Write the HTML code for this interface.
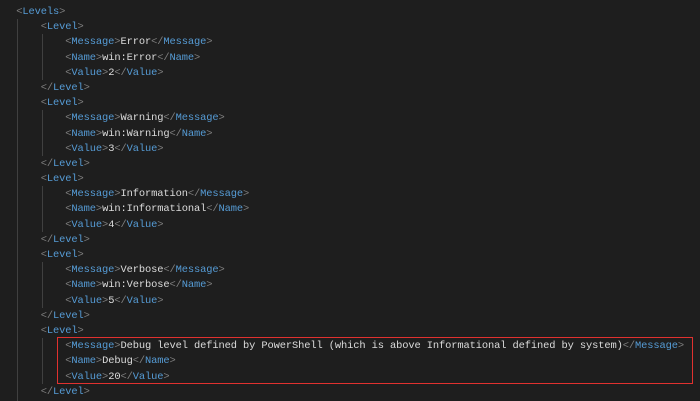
<!DOCTYPE html>
<html><head><style>
html,body{margin:0;padding:0;background:#1e1e1e;width:700px;height:401px;overflow:hidden}
.c{position:absolute;left:4px;top:5px;font-family:"Liberation Mono",monospace;font-size:10.4px;letter-spacing:-0.11px;line-height:15.2px;color:#dcdcdc}
.l{height:15.2px;white-space:pre}
.b{color:#808080}.t{color:#569cd6}
.g{position:absolute;width:1px;background:#404040}
.box{position:absolute;left:57px;top:337px;width:634px;height:45px;border:1px solid #e0312f}
</style></head><body>
<div class="g" style="left:17px;top:19px;height:382px"></div>
<div class="g" style="left:42px;top:34px;height:46px"></div>
<div class="g" style="left:42px;top:110px;height:46px"></div>
<div class="g" style="left:42px;top:186px;height:46px"></div>
<div class="g" style="left:42px;top:262px;height:46px"></div>
<div class="g" style="left:42px;top:338px;height:46px"></div>
<div class="box"></div>
<div class="c"><div class="l">  <span class="b">&lt;</span><span class="t">Levels</span><span class="b">&gt;</span></div><div class="l">      <span class="b">&lt;</span><span class="t">Level</span><span class="b">&gt;</span></div><div class="l">          <span class="b">&lt;</span><span class="t">Message</span><span class="b">&gt;</span>Error<span class="b">&lt;/</span><span class="t">Message</span><span class="b">&gt;</span></div><div class="l">          <span class="b">&lt;</span><span class="t">Name</span><span class="b">&gt;</span>win:Error<span class="b">&lt;/</span><span class="t">Name</span><span class="b">&gt;</span></div><div class="l">          <span class="b">&lt;</span><span class="t">Value</span><span class="b">&gt;</span>2<span class="b">&lt;/</span><span class="t">Value</span><span class="b">&gt;</span></div><div class="l">      <span class="b">&lt;/</span><span class="t">Level</span><span class="b">&gt;</span></div><div class="l">      <span class="b">&lt;</span><span class="t">Level</span><span class="b">&gt;</span></div><div class="l">          <span class="b">&lt;</span><span class="t">Message</span><span class="b">&gt;</span>Warning<span class="b">&lt;/</span><span class="t">Message</span><span class="b">&gt;</span></div><div class="l">          <span class="b">&lt;</span><span class="t">Name</span><span class="b">&gt;</span>win:Warning<span class="b">&lt;/</span><span class="t">Name</span><span class="b">&gt;</span></div><div class="l">          <span class="b">&lt;</span><span class="t">Value</span><span class="b">&gt;</span>3<span class="b">&lt;/</span><span class="t">Value</span><span class="b">&gt;</span></div><div class="l">      <span class="b">&lt;/</span><span class="t">Level</span><span class="b">&gt;</span></div><div class="l">      <span class="b">&lt;</span><span class="t">Level</span><span class="b">&gt;</span></div><div class="l">          <span class="b">&lt;</span><span class="t">Message</span><span class="b">&gt;</span>Information<span class="b">&lt;/</span><span class="t">Message</span><span class="b">&gt;</span></div><div class="l">          <span class="b">&lt;</span><span class="t">Name</span><span class="b">&gt;</span>win:Informational<span class="b">&lt;/</span><span class="t">Name</span><span class="b">&gt;</span></div><div class="l">          <span class="b">&lt;</span><span class="t">Value</span><span class="b">&gt;</span>4<span class="b">&lt;/</span><span class="t">Value</span><span class="b">&gt;</span></div><div class="l">      <span class="b">&lt;/</span><span class="t">Level</span><span class="b">&gt;</span></div><div class="l">      <span class="b">&lt;</span><span class="t">Level</span><span class="b">&gt;</span></div><div class="l">          <span class="b">&lt;</span><span class="t">Message</span><span class="b">&gt;</span>Verbose<span class="b">&lt;/</span><span class="t">Message</span><span class="b">&gt;</span></div><div class="l">          <span class="b">&lt;</span><span class="t">Name</span><span class="b">&gt;</span>win:Verbose<span class="b">&lt;/</span><span class="t">Name</span><span class="b">&gt;</span></div><div class="l">          <span class="b">&lt;</span><span class="t">Value</span><span class="b">&gt;</span>5<span class="b">&lt;/</span><span class="t">Value</span><span class="b">&gt;</span></div><div class="l">      <span class="b">&lt;/</span><span class="t">Level</span><span class="b">&gt;</span></div><div class="l">      <span class="b">&lt;</span><span class="t">Level</span><span class="b">&gt;</span></div><div class="l">          <span class="b">&lt;</span><span class="t">Message</span><span class="b">&gt;</span>Debug level defined by PowerShell (which is above Informational defined by system)<span class="b">&lt;/</span><span class="t">Message</span><span class="b">&gt;</span></div><div class="l">          <span class="b">&lt;</span><span class="t">Name</span><span class="b">&gt;</span>Debug<span class="b">&lt;/</span><span class="t">Name</span><span class="b">&gt;</span></div><div class="l">          <span class="b">&lt;</span><span class="t">Value</span><span class="b">&gt;</span>20<span class="b">&lt;/</span><span class="t">Value</span><span class="b">&gt;</span></div><div class="l">      <span class="b">&lt;/</span><span class="t">Level</span><span class="b">&gt;</span></div></div>
</body></html>
